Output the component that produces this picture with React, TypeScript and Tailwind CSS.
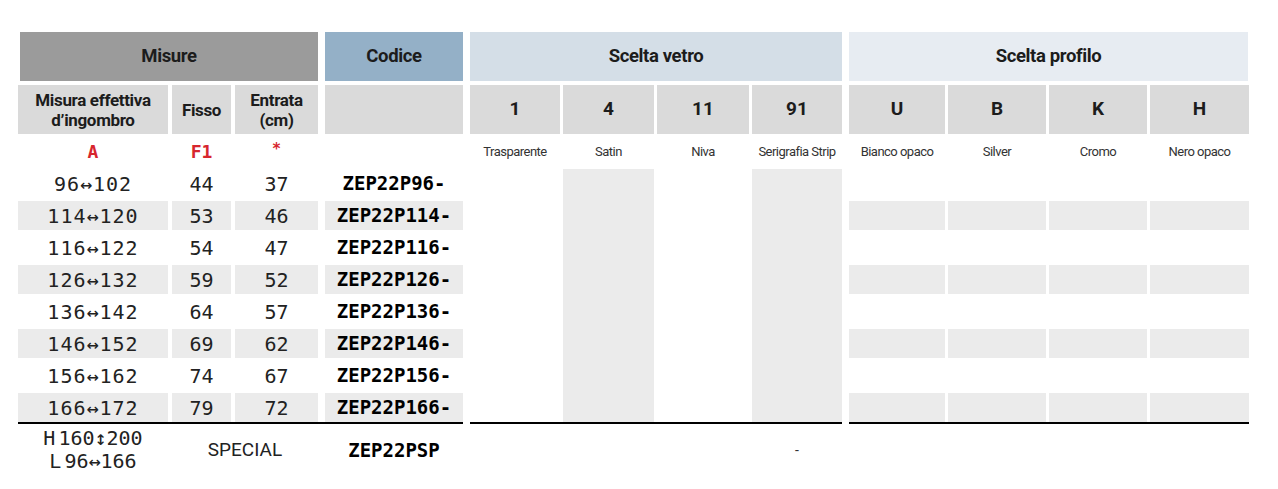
const sans = "font-['Roboto','Liberation_Sans',sans-serif]";
const mono = "font-['DejaVu_Sans_Mono','Liberation_Mono',monospace]";

const rows = [
  { a: "96↔102", f: "44", e: "37", code: "ZEP22P96-" },
  { a: "114↔120", f: "53", e: "46", code: "ZEP22P114-" },
  { a: "116↔122", f: "54", e: "47", code: "ZEP22P116-" },
  { a: "126↔132", f: "59", e: "52", code: "ZEP22P126-" },
  { a: "136↔142", f: "64", e: "57", code: "ZEP22P136-" },
  { a: "146↔152", f: "69", e: "62", code: "ZEP22P146-" },
  { a: "156↔162", f: "74", e: "67", code: "ZEP22P156-" },
  { a: "166↔172", f: "79", e: "72", code: "ZEP22P166-" },
];

const vetro = [
  { n: "1", label: "Trasparente", w: "w-[90px]", shade: false },
  { n: "4", label: "Satin", w: "w-[91px]", shade: true },
  { n: "11", label: "Niva", w: "w-[92px]", shade: false },
  { n: "91", label: "Serigrafia Strip", w: "w-[90px]", shade: true },
];

const profilo = [
  { n: "U", label: "Bianco opaco", w: "w-[96px]" },
  { n: "B", label: "Silver", w: "w-[98px]" },
  { n: "K", label: "Cromo", w: "w-[98px]" },
  { n: "H", label: "Nero opaco", w: "w-[99px]" },
];

export default function App() {
  return (
    <div className={`w-[1278px] h-[489px] bg-white pt-[32px] pl-[18px] text-[#1c1c1c] ${sans}`}>
      {/* group headers */}
      <div className="flex gap-[7px] h-[49px]">
        <div className="w-[298px] ml-[2px] bg-[#9b9b9b] flex items-center justify-center text-[18.5px] font-bold tracking-[-0.02em]">
          Misure
        </div>
        <div className="w-[138px] bg-[#94b0c7] flex items-center justify-center text-[18.5px] font-bold tracking-[-0.02em]">
          Codice
        </div>
        <div className="w-[372px] bg-[#d4dee7] flex items-center justify-center text-[18.5px] font-bold tracking-[-0.02em]">
          Scelta vetro
        </div>
        <div className="w-[399px] bg-[#e7ecf2] flex items-center justify-center text-[18.5px] font-bold tracking-[-0.02em]">
          Scelta profilo
        </div>
      </div>

      {/* column headers */}
      <div className="flex gap-[7px] h-[49px] mt-[4px]">
        <div className="flex gap-[4px] text-[17px] font-bold leading-[20px] tracking-[-0.02em] text-center">
          <div className="w-[150px] bg-[#dadada] flex items-center justify-center">
            Misura effettiva
            <br />
            d’ingombro
          </div>
          <div className="w-[59px] bg-[#dadada] flex items-center justify-center">Fisso</div>
          <div className="w-[83px] bg-[#dadada] flex items-center justify-center">
            Entrata
            <br />
            (cm)
          </div>
        </div>
        <div className="w-[138px] bg-[#dadada]" />
        <div className="flex gap-[3px]">
          {vetro.map((v) => (
            <div key={v.n} className={`${v.w} bg-[#dadada] flex items-center justify-center text-[19px] font-bold`}>
              {v.n}
            </div>
          ))}
        </div>
        <div className="flex gap-[3px]">
          {profilo.map((p) => (
            <div key={p.n} className={`${p.w} bg-[#dadada] flex items-center justify-center text-[19px] font-bold`}>
              {p.n}
            </div>
          ))}
        </div>
      </div>

      {/* labels */}
      <div className="flex gap-[7px] h-[35px] items-center">
        <div className={`flex gap-[4px] text-[18px] font-bold text-[#d7262e] ${mono}`}>
          <div className="w-[150px] text-center">A</div>
          <div className="w-[59px] text-center">F1</div>
          <div className="w-[83px] text-center text-[15px]">*</div>
        </div>
        <div className="w-[138px]" />
        <div className="flex gap-[3px] text-[13px] text-[#333] tracking-[-0.04em]">
          {vetro.map((v) => (
            <div key={v.n} className={`${v.w} text-center`}>
              {v.label}
            </div>
          ))}
        </div>
        <div className="flex gap-[3px] text-[13px] text-[#333] tracking-[-0.04em]">
          {profilo.map((p) => (
            <div key={p.n} className={`${p.w} text-center`}>
              {p.label}
            </div>
          ))}
        </div>
      </div>

      {/* body */}
      <div className="flex gap-[7px] items-start">
        <div className="w-[445px] flex flex-col gap-[3px] border-b-2 border-black">
          {rows.map((r, i) => {
            const bg = i % 2 === 1 ? "bg-[#ebebeb]" : "";
            return (
              <div key={r.code} className="flex gap-[7px] h-[29px]">
                <div className={`flex gap-[4px] text-[20px] text-[#222] ${mono}`}>
                  <div className={`w-[150px] ${bg} flex items-center justify-center tracking-[0.05em]`}>{r.a}</div>
                  <div className={`w-[59px] ${bg} flex items-center justify-center`}>{r.f}</div>
                  <div className={`w-[83px] ${bg} flex items-center justify-center`}>{r.e}</div>
                </div>
                <div className={`w-[138px] ${bg} flex items-center justify-center text-[19px] font-bold text-black ${mono}`}>
                  {r.code}
                </div>
              </div>
            );
          })}
        </div>

        <div className="w-[372px] flex gap-[3px] h-[255px] border-b-2 border-black">
          {vetro.map((v) => (
            <div key={v.n} className={`${v.w} h-full ${v.shade ? "bg-[#ebebeb]" : ""}`} />
          ))}
        </div>

        <div className="w-[400px] flex flex-col gap-[3px] border-b-2 border-black">
          {rows.map((r, i) => (
            <div key={r.code} className="flex gap-[3px] h-[29px]">
              {profilo.map((p) => (
                <div key={p.n} className={`${p.w} ${i % 2 === 1 ? "bg-[#ebebeb]" : ""}`} />
              ))}
            </div>
          ))}
        </div>
      </div>

      {/* special row */}
      <div className="flex gap-[7px] h-[52px] items-center">
        <div className="flex gap-[4px] items-center">
          <div className={`w-[150px] flex flex-col items-center text-[20px] leading-[23px] text-[#222] ${mono}`}>
            <div className="flex gap-[3px]">
              <span>H</span>
              <span>160↕200</span>
            </div>
            <div className="flex gap-[3px]">
              <span>L</span>
              <span>96↔166</span>
            </div>
          </div>
          <div className="w-[146px] text-center text-[19px] text-[#222]">SPECIAL</div>
        </div>
        <div className={`w-[138px] text-center text-[19px] font-bold text-black ${mono}`}>ZEP22PSP</div>
        <div className="w-[372px] flex gap-[3px]">
          <div className="w-[90px]" />
          <div className="w-[91px]" />
          <div className="w-[92px]" />
          <div className="w-[90px] text-center text-[14px] text-[#333]">-</div>
        </div>
      </div>
    </div>
  );
}
